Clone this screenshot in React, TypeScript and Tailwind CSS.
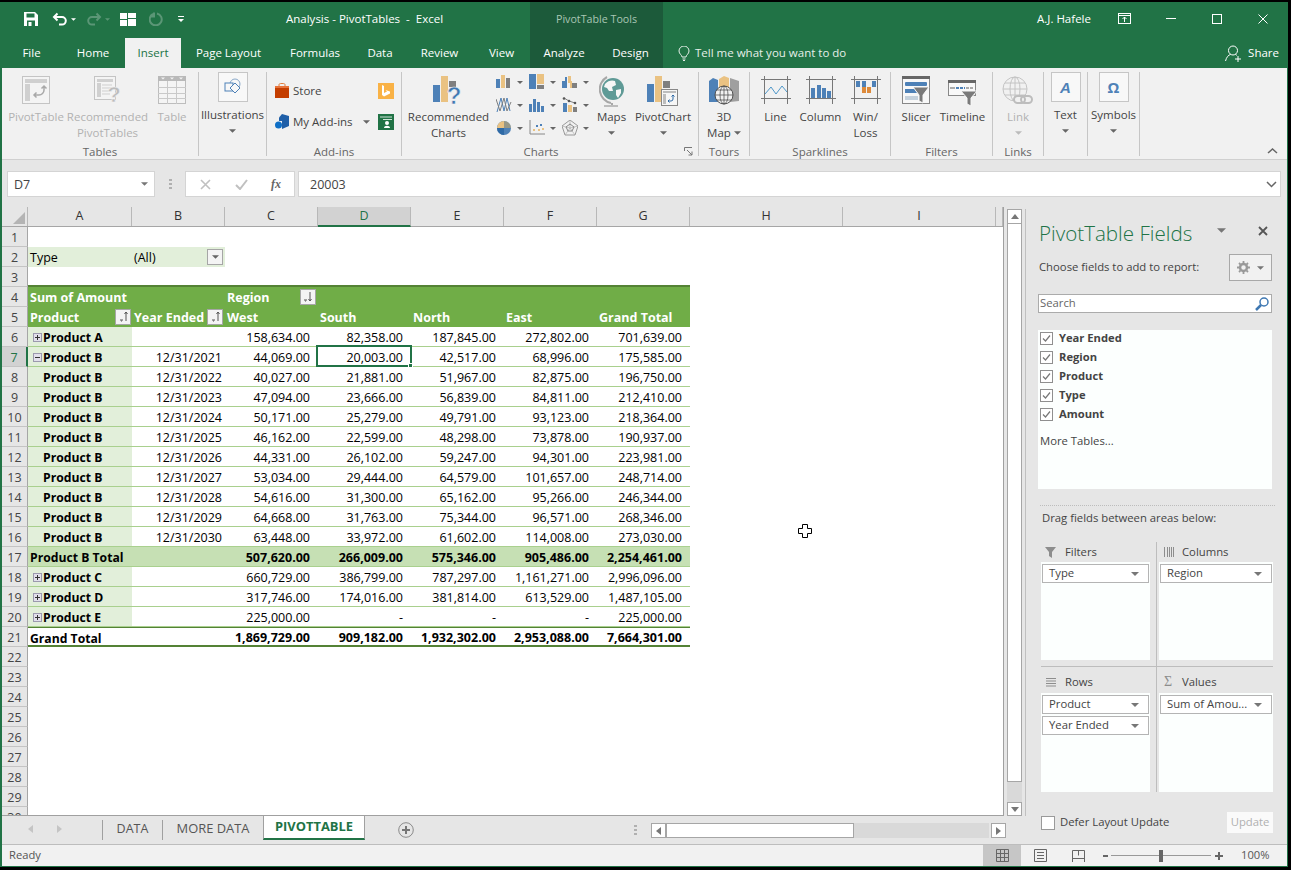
import React from "react";

const Caret = ({ c = "#666", w = 7, className = "" }: { c?: string; w?: number; className?: string }) => (
  <svg width={w} height={Math.ceil(w / 2) + 0} viewBox="0 0 8 4" className={"shrink-0 " + className}>
    <path d="M0 0h8L4 4z" fill={c} />
  </svg>
);

const Big = ({ w, lines, icon, caret, dis, boxed, inlineCaret }: { w: string; lines: string[]; icon: React.ReactNode; caret?: boolean; dis?: boolean; boxed?: boolean; inlineCaret?: boolean }) => (
  <div className={`${w} shrink-0 flex flex-col items-center ${boxed ? "pt-[4px]" : "pt-[8px]"} ${dis ? "text-[#b1b1b1]" : "text-[#444]"}`}>
    <div className={`${boxed ? "h-[35px]" : "h-[33px]"} w-full flex justify-center items-start`}>{icon}</div>
    {lines.map((l, i) => (
      <div key={i} className="h-[16px] leading-[16px] whitespace-nowrap text-[11.5px] flex items-center gap-[3px]">
        {l}
        {inlineCaret && i === lines.length - 1 && <Caret c="#666" />}
      </div>
    ))}
    {caret && <Caret c={dis ? "#bbb" : "#666"} className="mt-[6px]" />}
  </div>
);

const Group = ({ w, label, children, launcher }: { w: string; label: string; children: React.ReactNode; launcher?: boolean }) => (
  <div className={`${w} shrink-0 h-[91px] flex flex-col`}>
    <div className="h-[76px] flex items-start">{children}</div>
    <div className="h-[15px] mt-px flex items-center text-[11.5px] leading-[15px] text-[#666]">
      <div className="flex-1 text-center">{label}</div>
      {launcher && (
        <div className="w-[18px] flex justify-start pl-[4px]">
          <svg width="9" height="9" viewBox="0 0 9 9"><path d="M.5 4V.5H8M3 3l5 5M8 4.5V8H4.5" fill="none" stroke="#777" /></svg>
        </div>
      )}
    </div>
  </div>
);

const Sep = () => <div className="w-px shrink-0 h-[84px] mt-[4px] bg-[#c6c6c6]" />;

const Boxed = ({ children }: { children: React.ReactNode }) => (
  <div className="w-[30px] h-[30px] bg-[#f8f8f8] border border-[#c6c6c6] flex items-center justify-center">{children}</div>
);

/* ---------- ribbon icons ---------- */
const IcPivot = () => (
  <svg width="28" height="28" viewBox="0 0 28 28">
    <rect x=".5" y=".5" width="27" height="27" fill="#f4f4f4" stroke="#c4c4c4" />
    <rect x="3" y="3" width="22" height="4" fill="#d0d0d0" />
    <rect x="3" y="8" width="5" height="17" fill="#d0d0d0" />
    <path d="M22 10v4a5 5 0 0 1-5 5h-5M19.5 12.5 22 10l2.5 2.5M14.5 16.5 12 19l2.5 2.5" fill="none" stroke="#a9a9a9" strokeWidth="1.5" />
  </svg>
);
const IcRecPivot = () => (
  <svg width="28" height="33" viewBox="0 0 28 33">
    <rect x=".5" y=".5" width="21" height="23" fill="#f4f4f4" stroke="#c4c4c4" />
    <rect x="3" y="3" width="16" height="3" fill="#d0d0d0" />
    <rect x="3" y="7" width="4" height="14" fill="#d0d0d0" />
    <path d="M8 9h10M8 12h10M8 15h8M8 18h8" stroke="#cfcfcf" />
    <text x="20" y="26" textAnchor="middle" fontSize="22" fontWeight="700" fontFamily="'Liberation Sans',sans-serif" fill="#bcbcbc" stroke="#f1f1f1" strokeWidth=".5">?</text>
  </svg>
);
const IcTable = () => (
  <svg width="28" height="28" viewBox="0 0 28 28">
    <rect x=".5" y=".5" width="27" height="27" fill="#f4f4f4" stroke="#bdbdbd" />
    <rect x="0" y="0" width="28" height="5" fill="#b9b9b9" />
    <path d="M0 11.5h28M0 17.5h28M0 22.5h28M9.5 5v23M18.5 5v23" stroke="#c9c9c9" />
    <path d="M3 1.5h4L5 3.5zM12 1.5h4L14 3.5zM21 1.5h4L23 3.5z" fill="#f4f4f4" />
  </svg>
);
const IcIllus = () => (
  <svg width="18" height="18" viewBox="0 0 18 18">
    <circle cx="11" cy="6" r="5" fill="none" stroke="#8aa9c9" />
    <rect x="1" y="5" width="8" height="8" fill="#f8f8f8" stroke="#4e81b7" />
    <path d="M11 5l5 5-5 5-5-5z" fill="#f8f8f8" stroke="#4e81b7" />
  </svg>
);
const IcStore = () => (
  <svg width="14" height="15" viewBox="0 0 14 15">
    <path d="M4 3V1.5C4 .8 5 .5 7 .5s3 .3 3 1V3" fill="none" stroke="#e07b39" />
    <path d="M0 3h14v12H0z" fill="#c43e00" />
    <path d="M0 3h14v2H0z" fill="#e8743b" />
  </svg>
);
const IcBing = () => (
  <div className="w-[16px] h-[16px] bg-[#f9b246] flex items-center justify-center">
    <svg width="10" height="12" viewBox="0 0 10 12"><path d="M1 0l2 1v7l3-1.5L4.5 5 9 6.5v2L3 11.5 1 10z" fill="#fff" /></svg>
  </div>
);
const IcAddins = () => (
  <svg width="15" height="15" viewBox="0 0 15 15">
    <path d="M7 0l7 2v10l-7 3V8L7 6z" fill="#1f5fa8" />
    <path d="M4 3.5L7 0l0 7-3 0z" fill="#1f5fa8" />
    <circle cx="3.5" cy="11" r="3.5" fill="#0f6fc6" />
  </svg>
);
const IcGreen = () => (
  <div className="w-[16px] h-[16px] bg-[#217346] flex items-center justify-center">
    <svg width="12" height="12" viewBox="0 0 12 12"><path d="M0 1h12M3 3.5h9" stroke="#cfe3d7" /><circle cx="7" cy="7" r="2" fill="#fff" /><path d="M4 12c0-3 6-3 6 0z" fill="#fff" /></svg>
  </div>
);
const IcRecCharts = () => (
  <svg width="32" height="34" viewBox="0 0 32 34">
    <rect x="0" y="9" width="7" height="17" fill="#4e81b7" />
    <rect x="8" y="0" width="7" height="26" fill="#eac282" />
    <rect x="16" y="5" width="7" height="6" fill="#7f7f7f" />
    <text x="21" y="28" textAnchor="middle" fontSize="24" fontWeight="700" fontFamily="'Liberation Sans',sans-serif" fill="#3f78b2" stroke="#f1f1f1" strokeWidth=".6">?</text>
  </svg>
);
const B = "#4e81b7", T = "#eac282", G = "#7f7f7f", O = "#dd8a3a";
const Mini = ({ n }: { n: number }) => {
  const g: Record<number, React.ReactNode> = {
    0: <><rect x="0" y="5" width="4" height="9" fill={B} /><rect x="5" y="1" width="4" height="13" fill={T} /><rect x="10" y="4" width="4" height="10" fill={G} /></>,
    1: <><rect x="0" y="0" width="7" height="15" fill={B} /><rect x="8" y="0" width="7" height="10" fill={T} /><rect x="8" y="11" width="7" height="4" fill={G} /></>,
    2: <><path d="M0 14V7h3V3h2v11z" fill={B} /><path d="M6 14V2h3v5h1v7h-2V9H6z" fill={T} /><rect x="10" y="9" width="5" height="5" fill={G} /></>,
    3: <><path d="M1 15L5 1l3 13 3-13 3 13" fill="none" stroke={B} /><path d="M0 2l4 12 4-13 3 13 4-9" fill="none" stroke={G} /></>,
    4: <><rect x="0" y="7" width="3" height="8" fill={B} /><rect x="4" y="2" width="3" height="13" fill={B} /><rect x="8" y="5" width="3" height="10" fill={B} /><rect x="12" y="9" width="3" height="6" fill={B} /></>,
    5: <><rect x="1" y="6" width="4" height="9" fill={B} /><rect x="6" y="8" width="4" height="7" fill={T} /><rect x="11" y="10" width="4" height="5" fill={G} /><path d="M2 1l5 3 6 2" fill="none" stroke={G} /><circle cx="2" cy="1.5" r="1.3" fill="#555" /><circle cx="7" cy="4" r="1.3" fill="#555" /><circle cx="13" cy="6" r="1.3" fill="#555" /></>,
    6: <><circle cx="8" cy="8" r="7" fill={B} /><path d="M8 8V1a7 7 0 0 0-7 7z" fill={T} /><path d="M8 8H1a7 7 0 0 0 7 7z" fill="#2f6aa6" /><path d="M8 1v7h7a7 7 0 0 0-7-7z" fill="#c9a968" opacity=".6" /></>,
    7: <><path d="M1 0v14h15" fill="none" stroke="#888" /><rect x="4" y="9" width="2" height="2" fill={T} /><rect x="7" y="5" width="2" height="2" fill={B} /><rect x="9" y="9" width="2" height="2" fill={T} /><rect x="11" y="4" width="2" height="2" fill={B} /><rect x="13" y="8" width="2" height="2" fill={T} /></>,
    8: <><path d="M8 0l8 6-3 9H3L0 6z" fill="none" stroke="#999" /><path d="M8 0v8M0 6l8 2M16 6L8 8M3 15l5-7M13 15L8 8" stroke="#aaa" fill="none" strokeWidth=".7" /><path d="M8 4l4 3-2 4H6L4 7z" fill="none" stroke="#888" /></>,
  };
  return <svg width="16" height="16" viewBox="0 0 16 16">{g[n]}</svg>;
};
const IcMaps = () => (
  <svg width="26" height="31" viewBox="0 0 26 31">
    <path d="M8 1a14 14 0 0 0 4 26M13 27v2" fill="none" stroke="#a7a7a7" strokeWidth="2" />
    <path d="M5 29h14v2H5z" fill="#bcbcbc" />
    <circle cx="14" cy="13" r="11" fill="#5f9a96" />
    <path d="M6 8c3-4 8-4 10-3l1 4-4 2 1 4-4 0-2-3-3-1zM17 14l5-1 0 4-3 5-2-3z" fill="#f6f6f6" />
  </svg>
);
const IcPivotChart = () => (
  <svg width="32" height="30" viewBox="0 0 32 30">
    <rect x="0" y="8" width="7" height="18" fill={B} />
    <rect x="8" y="0" width="7" height="26" fill={T} />
    <rect x="16" y="5" width="7" height="7" fill={G} />
    <rect x="14.5" y="13.5" width="16" height="16" fill="#f6f6f6" stroke="#888" />
    <path d="M16 15h13v2H16zM16 18h3v10h-3z" fill="#bdbdbd" />
    <path d="M26 19v4a2 2 0 0 1-2 2h-3M24.5 20.5l1.5-1.5 1.5 1.5M22.5 23.5L21 25l1.5 1.5" fill="none" stroke="#2f6aa6" />
  </svg>
);
const Ic3D = () => (
  <svg width="30" height="29" viewBox="0 0 30 29">
    <path d="M0 5l4-3 5 2v22H0z" fill={B} />
    <path d="M10 3l5-3 5 2v14H10z" fill={T} />
    <path d="M21 2l9 3v20l-9 1z" fill="#9f9f9f" />
    <circle cx="15" cy="19" r="9" fill="#f1f1f1" stroke="#444" strokeWidth=".9" />
    <path d="M6 19h18M15 10v18M8 14h14M8 24h14" stroke="#444" strokeWidth=".7" fill="none" />
    <ellipse cx="15" cy="19" rx="4" ry="9" fill="none" stroke="#444" strokeWidth=".7" />
  </svg>
);
const SparkFrame = ({ children }: { children: React.ReactNode }) => (
  <svg width="30" height="28" viewBox="0 0 30 28">
    <path d="M0 3.5h30M0 22.5h30M3.5 0v28M26.5 0v28" stroke="#777" />
    {children}
  </svg>
);
const IcSlicer = () => (
  <svg width="28" height="28" viewBox="0 0 28 28">
    <rect x=".5" y=".5" width="27" height="27" fill="#f8f8f8" stroke="#888" />
    <rect x="0" y="0" width="28" height="3" fill="#666" />
    <rect x="3" y="6" width="22" height="4" rx="1" fill={B} />
    <rect x="3" y="13" width="12" height="4" fill={B} />
    <rect x="3" y="20" width="13" height="4" fill="#c5d1dc" />
    <path d="M11 11h16l-6 8v8l-4-2v-6z" fill="#7a7a7a" stroke="#f8f8f8" />
  </svg>
);
const IcTimeline = () => (
  <svg width="29" height="26" viewBox="0 0 29 26">
    <rect x=".5" y=".5" width="27" height="15" fill="#f8f8f8" stroke="#888" />
    <rect x="0" y="0" width="28" height="3" fill="#666" />
    <path d="M2 8h5" stroke="#aaa" strokeWidth="2" />
    <path d="M8 8h9" stroke={B} strokeWidth="2" strokeDasharray="3 1" />
    <path d="M18 8h8" stroke="#aaa" strokeWidth="2" strokeDasharray="3 1" />
    <path d="M13 11h16l-6 7v8l-4-2v-6z" fill="#7a7a7a" stroke="#f8f8f8" />
  </svg>
);
const IcLink = () => (
  <svg width="32" height="32" viewBox="0 0 32 32">
    <circle cx="13" cy="13" r="12" fill="none" stroke="#c4c4c4" />
    <ellipse cx="13" cy="13" rx="5" ry="12" fill="none" stroke="#c4c4c4" />
    <path d="M1 13h24M3 7h20M3 19h20M13 1v24" stroke="#c4c4c4" />
    <rect x="12" y="20" width="11" height="7" rx="3.5" fill="#f1f1f1" stroke="#bdbdbd" strokeWidth="2" />
    <rect x="19" y="20" width="11" height="7" rx="3.5" fill="none" stroke="#bdbdbd" strokeWidth="2" />
  </svg>
);

/* ---------- sheet ---------- */
const allHeaders = [
  ["A", "w-[104px]"], ["B", "w-[93px]"], ["C", "w-[93px]"], ["D", "w-[93px]"], ["E", "w-[93px]"], ["F", "w-[93px]"], ["G", "w-[93px]"], ["H", "w-[153px]"], ["I", "w-[153px]"], ["", "w-[7px]"],
];

type Row = { n: number; a: string; exp?: "+" | "-"; b?: string; v: string[]; kind?: "total" | "grand" | "child" };
const rows: Row[] = [
  { n: 6, a: "Product A", exp: "+", v: ["158,634.00", "82,358.00", "187,845.00", "272,802.00", "701,639.00"] },
  { n: 7, a: "Product B", exp: "-", b: "12/31/2021", v: ["44,069.00", "20,003.00", "42,517.00", "68,996.00", "175,585.00"] },
  { n: 8, a: "Product B", kind: "child", b: "12/31/2022", v: ["40,027.00", "21,881.00", "51,967.00", "82,875.00", "196,750.00"] },
  { n: 9, a: "Product B", kind: "child", b: "12/31/2023", v: ["47,094.00", "23,666.00", "56,839.00", "84,811.00", "212,410.00"] },
  { n: 10, a: "Product B", kind: "child", b: "12/31/2024", v: ["50,171.00", "25,279.00", "49,791.00", "93,123.00", "218,364.00"] },
  { n: 11, a: "Product B", kind: "child", b: "12/31/2025", v: ["46,162.00", "22,599.00", "48,298.00", "73,878.00", "190,937.00"] },
  { n: 12, a: "Product B", kind: "child", b: "12/31/2026", v: ["44,331.00", "26,102.00", "59,247.00", "94,301.00", "223,981.00"] },
  { n: 13, a: "Product B", kind: "child", b: "12/31/2027", v: ["53,034.00", "29,444.00", "64,579.00", "101,657.00", "248,714.00"] },
  { n: 14, a: "Product B", kind: "child", b: "12/31/2028", v: ["54,616.00", "31,300.00", "65,162.00", "95,266.00", "246,344.00"] },
  { n: 15, a: "Product B", kind: "child", b: "12/31/2029", v: ["64,668.00", "31,763.00", "75,344.00", "96,571.00", "268,346.00"] },
  { n: 16, a: "Product B", kind: "child", b: "12/31/2030", v: ["63,448.00", "33,972.00", "61,602.00", "114,008.00", "273,030.00"] },
  { n: 17, a: "Product B Total", kind: "total", v: ["507,620.00", "266,009.00", "575,346.00", "905,486.00", "2,254,461.00"] },
  { n: 18, a: "Product C", exp: "+", v: ["660,729.00", "386,799.00", "787,297.00", "1,161,271.00", "2,996,096.00"] },
  { n: 19, a: "Product D", exp: "+", v: ["317,746.00", "174,016.00", "381,814.00", "613,529.00", "1,487,105.00"] },
  { n: 20, a: "Product E", exp: "+", v: ["225,000.00", "-", "-", "-", "225,000.00"] },
  { n: 21, a: "Grand Total", kind: "grand", v: ["1,869,729.00", "909,182.00", "1,932,302.00", "2,953,088.00", "7,664,301.00"] },
];

const Heading = ({ n, active }: { n: number; active?: boolean }) => (
  <div className={`w-[26px] shrink-0 h-[20px] flex items-center justify-center pt-[4px] text-[12.5px] border-b border-[#c4c4c4] ${active ? "bg-[#d2d2d2] text-[#217346] border-r-2 border-r-[#217346]" : "bg-[#e6e6e6] text-[#444] border-r border-r-[#a6a6a6]"}`}>
    {n}
  </div>
);

const SortBtn = ({ up = true }: { up?: boolean }) => (
  <div className="w-[16px] h-[16px] -mt-[2px] bg-[#f4f4f4] border border-[#a6a6a6] flex items-center justify-center shrink-0">
    <svg width="12" height="12" viewBox="0 0 12 12">
      {up ? <path d="M9 1v9M7.500 3L9 1l1.500 2M3 9h3M4 10h1" stroke="#555" fill="none" /> : <path d="M8 1v9M6.500 8L8 10l1.500-2M2 9h3M3 10h1" stroke="#555" fill="none" />}
    </svg>
  </div>
);

const ExpBox = ({ plus }: { plus: boolean }) => (
  <div className="w-[9px] h-[9px] -mt-[3px] bg-[#e3e0ec] border border-[#9c9aae] flex items-center justify-center shrink-0 mr-px">
    <svg width="7" height="7" viewBox="0 0 7 7"><path d={plus ? "M1 3.500h5M3.500 1v5" : "M1 3.500h5"} stroke="#333" /></svg>
  </div>
);

const DataRow = ({ r }: { r: Row }) => {
  const tot = r.kind === "total";
  const gr = r.kind === "grand";
  const bold = tot || gr;
  const rowCls = gr
    ? "h-[20px] flex border-b-2 border-[#548235] border-t border-t-[#548235]"
    : `h-[20px] flex border-b border-[#a9d08e] ${tot ? "bg-[#c6e0b4]" : ""}`;
  return (
    <div className="flex h-[20px]">
      <Heading n={r.n} active={r.n === 7} />
      <div className={rowCls + " w-[662px] text-black"}>
        <div className={`w-[104px] h-[19px] flex items-center pt-[4px] font-bold text-[12.2px] whitespace-nowrap ${bold ? "pl-[2px]" : "pl-[5px]"} ${!bold ? "bg-[#e2efda]" : ""} ${gr ? "h-[17px] pt-[2px]" : ""}`}>
          {r.exp ? <ExpBox plus={r.exp === "+"} /> : r.kind === "child" ? <div className="w-[10px]" /> : null}
          {r.a}
        </div>
        <div className="w-[93px] h-[19px] flex items-center justify-end pt-[4px] pr-[3px]">{r.b}</div>
        {r.v.map((v, i) => (
          <div key={i} className={`w-[93px] h-[19px] flex items-center justify-end pr-[8px] relative ${gr ? "pt-[2px] h-[17px]" : "pt-[4px]"} ${bold ? "font-bold" : ""}`}>
            {v}
            {r.n === 7 && i === 1 && (
              <div className="absolute -left-[2px] -top-[2px] w-[96px] h-[22px] border-2 border-[#217346]">
                <div className="absolute -right-[3px] -bottom-[3px] w-[5px] h-[5px] bg-[#217346] border border-white" />
              </div>
            )}
          </div>
        ))}
      </div>
    </div>
  );
};

const Field = ({ t }: { t: string }) => (
  <div className="h-[19px] flex items-center gap-[6px] pl-[2px] pb-[3px]">
    <div className="w-[13px] h-[13px] bg-white border border-[#8f8f8f] flex items-center justify-center">
      <svg width="9" height="9" viewBox="0 0 9 9"><path d="M1 4.500l2.500 2.500L8 1.500" fill="none" stroke="#777" strokeWidth="1.200" /></svg>
    </div>
    <span className="font-bold text-[#444] text-[11.2px]">{t}</span>
  </div>
);

const AreaItem = ({ t }: { t: string }) => (
  <div className="h-[19px] mx-px mt-[2px] bg-white border border-[#b4b4b4] flex items-center justify-between pl-[6px] pr-[9px] text-[11.3px] text-[#444] whitespace-nowrap">
    <span>{t}</span>
    <Caret c="#777" w={8} />
  </div>
);

export default function App() {
  return (
    <div className="w-[1291px] h-[870px] bg-black pt-[2px] pr-[3px] pb-[3px] flex flex-col font-['Open_Sans',sans-serif] overflow-hidden relative">
      <div className="flex-1 flex flex-col border-l-2 border-r border-b border-[#217346] min-h-0">
        {/* title bar */}
        <div className="h-[36px] shrink-0 bg-[#217346] flex items-center text-white text-[11.5px] relative">
          <div className="w-[528px] h-full flex items-center shrink-0 pb-[2px]">
            <div className="flex items-center">
              <div className="ml-[21px]">
                <svg width="16" height="16" viewBox="0 0 16 16"><path d="M1 1h11l3 3v11H1z" fill="#fff" /><rect x="3.500" y="2.500" width="8" height="4" fill="#217346" /><rect x="4" y="9.500" width="8" height="5.500" fill="#217346" /><rect x="5.500" y="11" width="3" height="4" fill="#fff" /></svg>
              </div>
              <div className="ml-[13px]">
                <svg width="16" height="14" viewBox="0 0 16 14"><path d="M5.500 1.500L2 5l3.500 3.500M2 5h8a3.800 3.800 0 0 1 0 7.600H7" fill="none" stroke="#fff" strokeWidth="2" /></svg>
              </div>
              <Caret c="#fff" w={5} className="ml-[3px]" />
              <div className="ml-[10px]">
                <svg width="16" height="14" viewBox="0 0 16 14"><path d="M10.500 1.500L14 5l-3.500 3.500M14 5H6a3.800 3.800 0 0 0 0 7.600h3" fill="none" stroke="#5b9676" strokeWidth="2" /></svg>
              </div>
              <Caret c="#5b9676" w={5} className="ml-[3px]" />
              <div className="ml-[10px]">
                <svg width="16" height="13" viewBox="0 0 16 13"><path d="M0 0h7v6H0zM0 7h7v6H0zM8 0h8v5H8zM8 6h8v7H8z" fill="#fff" /></svg>
              </div>
              <div className="ml-[13px]">
                <svg width="14" height="14" viewBox="0 0 14 14"><path d="M8 1.500A6 6 0 1 1 4 2M5 .5v4H1" fill="none" stroke="#5b9676" strokeWidth="2" /></svg>
              </div>
              <div className="ml-[15px] flex flex-col items-center gap-[2px]">
                <div className="w-[6px] h-px bg-white" />
                <Caret c="#fff" w={6} />
              </div>
            </div>
          </div>
          <div className="absolute left-[284px] top-0 h-full flex items-center whitespace-pre pb-[2px]">Analysis - PivotTables  -  Excel</div>
          <div className="w-[133px] h-full bg-[#1c5a3a] flex items-center justify-center text-[#a9c6b4] text-[10.7px] shrink-0 pb-[2px]">PivotTable Tools</div>
          <div className="ml-[374px] w-[56px] whitespace-nowrap mb-[2px]">A.J. Hafele</div>
          <div className="ml-[25px] mb-[3px]"><svg width="13" height="11" viewBox="0 0 13 11"><rect x=".5" y=".5" width="12" height="10" fill="none" stroke="#fff" /><path d="M0 2.500h13M6.500 9V4M4.500 6l2-2 2 2" fill="none" stroke="#fff" /></svg></div>
          <div className="ml-[35px] w-[10px] h-px bg-white mb-[3px]" />
          <div className="ml-[36px] w-[10px] h-[10px] border border-white mb-[3px]" />
          <div className="ml-[36px] mb-[3px]"><svg width="10" height="10" viewBox="0 0 10 10"><path d="M.5.500l9 9M9.500.500l-9 9" stroke="#fff" /></svg></div>
        </div>
        {/* tabs */}
        <div className="h-[30px] shrink-0 bg-[#217346] flex items-center text-white text-[11.5px]">
          {[["File", "w-[59px]"], ["Home", "w-[64px]"]].map(([t, w]) => (
            <div key={t} className={`${w} text-center`}>{t}</div>
          ))}
          <div className="w-[56px] h-full bg-[#f1f1f1] text-[#217346] flex items-center justify-center">Insert</div>
          {[["Page Layout", "w-[95px]"], ["Formulas", "w-[78px]"], ["Data", "w-[52px]"], ["Review", "w-[67px]"], ["View", "w-[57px]"]].map(([t, w]) => (
            <div key={t} className={`${w} text-center`}>{t}</div>
          ))}
          <div className="h-full bg-[#1c5a3a] flex items-center w-[133px]">
            <div className="w-[68px] text-center">Analyze</div>
            <div className="w-[65px] text-center">Design</div>
          </div>
          <div className="ml-[15px] flex items-center gap-[5px] text-[#e6efe9]">
            <svg width="12" height="15" viewBox="0 0 12 15"><path d="M4 11c0-2-3-3-3-6a5 5 0 0 1 10 0c0 3-3 4-3 6zM4.500 13h3M5 14.500h2" fill="none" stroke="#e6efe9" /></svg>
            Tell me what you want to do
          </div>
          <div className="ml-auto mr-[8px] flex items-center gap-[6px]">
            <svg width="17" height="17" viewBox="0 0 17 17"><circle cx="8" cy="5.500" r="4.500" fill="none" stroke="#fff" /><path d="M.5 16c1-4 3-6 5-6.500M10.500 9.500c.5.200 1 .5 1.500 1M10 14h6M13 11v6" fill="none" stroke="#fff" /></svg>
            Share
          </div>
        </div>
        {/* ribbon */}
        <div className="h-[92px] shrink-0 bg-[#f1f1f1] border-b border-[#d0d0d0] flex items-start">
          <Group w="w-[196px]" label="Tables">
            <div className="w-[4px]" />
            <Big w="w-[60px]" lines={["PivotTable"]} icon={<IcPivot />} dis />
            <Big w="w-[83px]" lines={["Recommended", "PivotTables"]} icon={<IcRecPivot />} dis />
            <Big w="w-[46px]" lines={["Table"]} icon={<IcTable />} dis />
          </Group>
          <Sep />
          <Group w="w-[67px]" label="">
            <Big w="w-full" lines={["Illustrations"]} boxed caret icon={<Boxed><IcIllus /></Boxed>} />
          </Group>
          <Sep />
          <Group w="w-[134px]" label="Add-ins">
            <div className="w-full pl-[8px] pr-[7px] pt-[14px] text-[11.5px] text-[#444]">
              <div className="h-[17px] flex items-center">
                <IcStore />
                <span className="ml-[4px]">Store</span>
                <div className="ml-auto"><IcBing /></div>
              </div>
              <div className="h-[17px] flex items-center mt-[14px]">
                <IcAddins />
                <span className="ml-[3px] w-[62px] whitespace-nowrap">My Add-ins</span>
                <Caret c="#666" className="ml-[8px]" />
                <div className="ml-auto"><IcGreen /></div>
              </div>
            </div>
          </Group>
          <Sep />
          <Group w="w-[296px]" label="Charts" launcher>
            <Big w="w-[93px]" lines={["Recommended", "Charts"]} icon={<IcRecCharts />} />
            <div className="w-[100px] shrink-0 grid grid-cols-3 pt-[6px] gap-y-[7px] pl-[1px]">
              {[0, 1, 2, 3, 4, 5, 6, 7, 8].map((n) => (
                <div key={n} className="flex items-center gap-[5px] h-[16px]">
                  <Mini n={n} />
                  <Caret c="#666" w={6} />
                </div>
              ))}
            </div>
            <Big w="w-[33px]" lines={["Maps"]} caret icon={<IcMaps />} />
            <Big w="w-[70px]" lines={["PivotChart"]} caret icon={<IcPivotChart />} />
          </Group>
          <Sep />
          <Group w="w-[50px]" label="Tours">
            <Big w="w-full" lines={["3D", "Map"]} inlineCaret icon={<Ic3D />} />
          </Group>
          <Sep />
          <Group w="w-[140px]" label="Sparklines">
            <div className="w-[3px]" />
            <Big w="w-[45px]" lines={["Line"]} icon={<SparkFrame><path d="M4 18l6-7 5 7 6-8 5 6" fill="none" stroke="#4e97c9" /></SparkFrame>} />
            <Big w="w-[45px]" lines={["Column"]} icon={<SparkFrame><path d="M5 12h4v10H5zM11 9h4v13h-4zM16 12h4v10h-4zM21 15h4v7h-4z" fill={B} /></SparkFrame>} />
            <Big w="w-[45px]" lines={["Win/", "Loss"]} icon={<SparkFrame><path d="M5 5h4v6H5zM11 5h4v6h-4zM21 5h4v6h-4z" fill={B} /><path d="M16 11h4v6h-4zM11 11h4v6h-4z" fill={O} /></SparkFrame>} />
          </Group>
          <Sep />
          <Group w="w-[101px]" label="Filters">
            <div className="w-[1px]" />
            <Big w="w-[48px]" lines={["Slicer"]} icon={<IcSlicer />} />
            <Big w="w-[45px]" lines={["Timeline"]} icon={<div className="pt-[4px]"><IcTimeline /></div>} />
          </Group>
          <Sep />
          <Group w="w-[50px]" label="Links">
            <Big w="w-full" lines={["Link"]} caret dis icon={<IcLink />} />
          </Group>
          <Sep />
          <Group w="w-[43px]" label="">
            <Big w="w-full" lines={["Text"]} boxed caret icon={<Boxed><span className="text-[#4e81b7] font-bold italic text-[15px] leading-none font-['Liberation_Sans',sans-serif]">A</span></Boxed>} />
          </Group>
          <Sep />
          <Group w="w-[51px]" label="">
            <Big w="w-full" lines={["Symbols"]} boxed caret icon={<Boxed><span className="text-[#4e81b7] font-bold text-[15px] leading-none">Ω</span></Boxed>} />
          </Group>
          <Sep />
          <div className="flex-1 h-[91px] flex items-end justify-end pr-[9px] pb-[5px]">
            <svg width="11" height="6" viewBox="0 0 11 6"><path d="M1 5l4.500-4L10 5" fill="none" stroke="#666" strokeWidth="1.500" /></svg>
          </div>
        </div>
        {/* formula bar */}
        <div className="h-[47px] shrink-0 bg-[#e6e6e6] pt-[11px] pl-[5px] pr-[6px] flex items-start text-[12.5px] text-[#444]">
          <div className="w-[148px] h-[26px] bg-white border border-[#d4d4d4] flex items-center justify-between pl-[6px] pr-[6px]">
            <span className="pt-[2px]">D7</span>
            <Caret c="#777" w={7} />
          </div>
          <div className="w-[30px] h-[26px] flex items-center justify-center">
            <svg width="3" height="11" viewBox="0 0 3 11"><path d="M0 0h3v2H0zM0 4h3v2H0zM0 8h3v2H0z" fill="#b0b0b0" /></svg>
          </div>
          <div className="w-[110px] h-[26px] bg-white border border-[#d4d4d4] flex items-center">
            <div className="w-[38px] flex justify-center"><svg width="11" height="11" viewBox="0 0 11 11"><path d="M1 1l9 9M10 1l-9 9" stroke="#c0c0c0" strokeWidth="1.600" /></svg></div>
            <div className="w-[34px] flex justify-center"><svg width="13" height="11" viewBox="0 0 13 11"><path d="M1 6l4 4 7-9" fill="none" stroke="#c0c0c0" strokeWidth="2" /></svg></div>
            <div className="w-[36px] text-center italic font-bold text-[#666] text-[12px] font-['Liberation_Serif',serif]">fx</div>
          </div>
          <div className="ml-[3px] flex-1 h-[26px] bg-white border border-[#d4d4d4] flex items-center justify-between pl-[11px] pr-[3px]">
            <span className="pt-[2px]">20003</span>
            <svg width="11" height="7" viewBox="0 0 11 7"><path d="M1 1l4.500 4.500L10 1" fill="none" stroke="#666" strokeWidth="1.500" /></svg>
          </div>
        </div>
        {/* workspace */}
        <div className="flex-1 flex min-h-0 bg-[#e6e6e6]">
          {/* left */}
          <div className="w-[1024px] shrink-0 flex flex-col">
            <div className="h-[609px] flex">
              <div className="w-[1002px] shrink-0 overflow-hidden border-r border-b border-[#a0a0a0] bg-white text-[12.5px]">
                {/* col headers */}
                <div className="flex h-[20px] bg-[#e6e6e6] border-b border-[#a6a6a6]">
                  <div className="w-[26px] shrink-0 flex items-end justify-end pr-[2px] pb-[2px] border-r border-[#b8b8b8]">
                    <svg width="12" height="12" viewBox="0 0 12 12"><path d="M12 0v12H0z" fill="#b4b4b4" /></svg>
                  </div>
                  {allHeaders.map(([h, w], i) => (
                    <div key={i} className={`${w} shrink-0 flex items-center justify-center border-r border-[#b8b8b8] text-[12.5px] ${h === "D" ? "bg-[#d2d2d2] text-[#217346] border-b-2 border-b-[#217346] h-[20px]" : "text-[#333]"}`}>{h}</div>
                  ))}
                </div>
                {/* row 1 */}
                <div className="flex h-[20px]"><Heading n={1} /></div>
                <div className="flex h-[20px]">
                  <Heading n={2} />
                  <div className="w-[197px] h-full bg-[#e2efda] flex items-center text-black pt-[2px]">
                    <div className="w-[104px] pl-[2px]">Type</div>
                    <div className="flex-1 flex items-center justify-between pl-[2px] pr-[2px]">
                      (All)
                      <div className="w-[16px] h-[16px] -mt-[2px] bg-[#f4f4f4] border border-[#a6a6a6] flex items-center justify-center"><Caret c="#666" /></div>
                    </div>
                  </div>
                </div>
                <div className="flex h-[20px]">
                  <Heading n={3} />
                  <div className="w-[662px] h-full border-b-2 border-[#548235]" />
                </div>
                <div className="flex h-[20px]">
                  <Heading n={4} />
                  <div className="w-[662px] h-full bg-[#70ad47] text-white font-bold flex items-center pt-[2px]">
                    <div className="w-[197px] pl-[2px]">Sum of Amount</div>
                    <div className="w-[93px] pl-[2px] whitespace-nowrap">Region</div>
                    <div className="w-[0px] -ml-[18px] mr-[18px]"><SortBtn up={false} /></div>
                  </div>
                </div>
                <div className="flex h-[20px]">
                  <Heading n={5} />
                  <div className="w-[662px] h-full bg-[#70ad47] text-white font-bold flex items-center pt-[2px]">
                    <div className="w-[104px] pl-[2px] flex items-center justify-between pr-px">Product<SortBtn /></div>
                    <div className="w-[93px] pl-[2px] flex items-center justify-between pr-[2px] whitespace-nowrap">Year Ended<SortBtn /></div>
                    <div className="w-[93px] pl-[2px]">West</div>
                    <div className="w-[93px] pl-[2px]">South</div>
                    <div className="w-[93px] pl-[2px]">North</div>
                    <div className="w-[93px] pl-[2px]">East</div>
                    <div className="w-[93px] pl-[2px] whitespace-nowrap">Grand Total</div>
                  </div>
                </div>
                {rows.map((r) => <DataRow key={r.n} r={r} />)}
                {Array.from({ length: 9 }, (_, i) => 22 + i).map((n) => (
                  <div key={n} className="flex h-[20px]"><Heading n={n} /></div>
                ))}
              </div>
              {/* v scrollbar */}
              <div className="w-[21px] shrink-0 pl-[3px] pt-[2px] flex flex-col">
                <div className="w-[15px] h-[15px] bg-white border border-[#a6a6a6] flex items-center justify-center"><svg width="8" height="5" viewBox="0 0 8 5"><path d="M0 5h8L4 0z" fill="#777" /></svg></div>
                <div className="w-[15px] h-[558px] bg-white border border-[#a6a6a6] border-t-0" />
                <div className="w-[15px] h-[20px] bg-[#d9d9d9]" />
                <div className="w-[15px] h-[14px] bg-white border border-[#a6a6a6] flex items-center justify-center"><svg width="8" height="5" viewBox="0 0 8 5"><path d="M0 0h8L4 5z" fill="#777" /></svg></div>
              </div>
              <div className="w-px shrink-0 bg-[#c0c0c0] mt-[2px]" />
            </div>
            {/* sheet tabs */}
            <div className="h-[29px] border-b border-[#bdbdbd] flex items-start text-[12.5px] text-[#555]">
              <div className="w-[100px] h-[28px] flex items-center pl-[26px] gap-[24px] pb-[3px] shrink-0">
                <svg width="5" height="8" viewBox="0 0 5 8"><path d="M5 0v8L0 4z" fill="#c4c4c4" /></svg>
                <svg width="5" height="8" viewBox="0 0 5 8"><path d="M0 0v8l5-4z" fill="#c4c4c4" /></svg>
              </div>
              <div className="w-px h-[20px] mt-[4px] bg-[#a0a0a0]" />
              <div className="w-[59px] h-[26px] flex items-center justify-center">DATA</div>
              <div className="w-px h-[20px] mt-[4px] bg-[#a0a0a0]" />
              <div className="w-[100px] h-[26px] flex items-center justify-center whitespace-nowrap text-[12.9px]">MORE DATA</div>
              <div className="w-[102px] h-[25px] -mt-px bg-white border-l border-r border-t border-[#a0a0a0] border-b-2 border-b-[#217346] flex items-center justify-center font-bold text-[#217346] text-[12.9px]">PIVOTTABLE</div>
              <div className="ml-[33px] mt-[6px]">
                <svg width="16" height="16" viewBox="0 0 16 16"><circle cx="8" cy="8" r="7.300" fill="none" stroke="#8a8a8a" /><path d="M4 8h8M8 4v8" stroke="#777" strokeWidth="2" /></svg>
              </div>
              <div className="ml-[220px] mt-[9px]"><svg width="3" height="11" viewBox="0 0 3 11"><path d="M0 0h3v2H0zM0 4h3v2H0zM0 8h3v2H0z" fill="#b0b0b0" /></svg></div>
              <div className="ml-[14px] mt-[7px] flex h-[15px]">
                <div className="w-[15px] bg-white border border-[#a6a6a6] flex items-center justify-center"><svg width="5" height="8" viewBox="0 0 5 8"><path d="M5 0v8L0 4z" fill="#777" /></svg></div>
                <div className="w-[188px] bg-white border border-[#a6a6a6]" />
                <div className="w-[135px] bg-[#d9d9d9]" />
                <div className="w-[15px] ml-[2px] bg-white border border-[#a6a6a6] flex items-center justify-center"><svg width="5" height="8" viewBox="0 0 5 8"><path d="M0 0v8l5-4z" fill="#777" /></svg></div>
              </div>
            </div>
          </div>
          {/* panel */}
          <div className="w-[261px] shrink-0 border-b border-[#bdbdbd] flex flex-col text-[11.3px] text-[#444]">
            <div className="h-[27px] mt-[13px] pl-[13px] pr-[19px] flex items-center">
              <span className="text-[20.6px] leading-[27px] text-[#217346] font-light whitespace-nowrap">PivotTable Fields</span>
              <Caret c="#777" w={9} className="ml-auto mb-[6px]" />
              <div className="ml-[32px] mb-[6px]"><svg width="10" height="10" viewBox="0 0 10 10"><path d="M1 1l8 8M9 1l-8 8" stroke="#555" strokeWidth="1.800" /></svg></div>
            </div>
            <div className="h-[27px] mt-[7px] pl-[13px] pr-[15px] flex items-center justify-between">
              <span>Choose fields to add to report:</span>
              <div className="w-[43px] h-[27px] bg-[#f1f1f1] border border-[#a8a8a8] flex items-center justify-center gap-[7px]">
                <svg width="13" height="13" viewBox="0 0 13 13"><circle cx="6.500" cy="6.500" r="3.500" fill="none" stroke="#999" strokeWidth="2.500" /><path d="M6.500 0v13M0 6.500h13M2 2l9 9M11 2l-9 9" stroke="#999" strokeWidth="1.800" strokeDasharray="2.200 8.600" /></svg>
                <Caret c="#777" />
              </div>
            </div>
            <div className="ml-[12px] w-[234px] h-[19px] mt-[13px] bg-white border border-[#ababab] flex items-center justify-between pl-[1px] pr-[2px] text-[#666]">
              <span>Search</span>
              <svg width="14" height="14" viewBox="0 0 14 14"><circle cx="9" cy="5" r="4" fill="none" stroke="#3f78b2" strokeWidth="1.500" /><path d="M6 8l-5 5" stroke="#3f78b2" strokeWidth="2.500" /></svg>
            </div>
            <div className="ml-[12px] w-[234px] h-[159px] mt-[17px] bg-[#fcfffe]">
              {["Year Ended", "Region", "Product", "Type", "Amount"].map((f) => <Field key={f} t={f} />)}
              <div className="pl-[2px] mt-[8px]">More Tables...</div>
            </div>
            <div className="ml-[14px] w-[235px] mt-[16px] border-t border-dotted border-[#bdbdbd]" />
            <div className="pl-[16px] mt-[4px] h-[16px] leading-[16px]">Drag fields between areas below:</div>
            <div className="ml-[15px] w-[232px] mt-[16px] grid grid-cols-[115px_1px_116px] grid-rows-[124px_1px_125px]">
              <div>
                <div className="h-[20px] flex items-center pl-[4px] gap-[9px]"><svg width="11" height="11" viewBox="0 0 11 11"><path d="M0 0h11L7 5v6L4 9V5z" fill="#8d8d8d" /></svg>Filters</div>
                <div className="w-[109px] h-[98px] bg-[#fcfffe] overflow-hidden"><AreaItem t="Type" /></div>
              </div>
              <div className="bg-[#bdbdbd]" />
              <div className="pl-[2px]">
                <div className="h-[20px] flex items-center pl-[5px] gap-[8px]"><svg width="10" height="10" viewBox="0 0 10 10"><path d="M0 0h1v10H0zM3 0h1v10H3zM5 0h1v10H5zM7 0h1v10H7zM9 0h1v10H9z" fill="#8d8d8d" /></svg>Columns</div>
                <div className="w-[114px] h-[98px] bg-[#fcfffe] overflow-hidden"><AreaItem t="Region" /></div>
              </div>
              <div className="col-span-3 bg-[#bdbdbd]" />
              <div>
                <div className="h-[26px] flex items-center pl-[5px] gap-[9px] pt-[4px]"><svg width="10" height="9" viewBox="0 0 10 9"><path d="M0 0h10v1H0zM0 2.500h10v1H0zM0 5h10v1H0zM0 7.500h10v1H0z" fill="#8d8d8d" /></svg>Rows</div>
                <div className="w-[109px] h-[99px] bg-[#fcfffe] overflow-hidden"><AreaItem t="Product" /><AreaItem t="Year Ended" /></div>
              </div>
              <div className="bg-[#bdbdbd]" />
              <div className="pl-[2px]">
                <div className="h-[26px] flex items-center pl-[5px] gap-[8px] pt-[4px]"><span className="w-[10px] text-[#8d8d8d] text-[14px] leading-none font-['Liberation_Serif',serif]">Σ</span>Values</div>
                <div className="w-[114px] h-[99px] bg-[#fcfffe] overflow-hidden"><AreaItem t="Sum of Amou..." /></div>
              </div>
            </div>
            <div className="mt-[20px] ml-[15px] mr-[14px] h-[21px] flex items-center">
              <div className="w-[14px] h-[14px] bg-white border border-[#9a9a9a]" />
              <span className="ml-[5px]">Defer Layout Update</span>
              <div className="ml-auto w-[46px] h-[21px] bg-[#fafafa] flex items-center justify-center text-[#b0b0b0]">Update</div>
            </div>
          </div>
        </div>
        {/* status bar */}
        <div className="h-[21px] shrink-0 bg-[#f1f1f1] flex items-center text-[11.2px] text-[#555]">
          <div className="pl-[7px]">Ready</div>
          <div className="ml-auto h-full flex items-center">
            <div className="w-[38px] h-full bg-[#c6c6c6] flex items-center justify-center">
              <svg width="13" height="13" viewBox="0 0 13 13"><path d="M.5.500h12v12H.5zM4.500.500v12M8.500.500v12M.5 4.500h12M.5 8.500h12" fill="none" stroke="#666" /></svg>
            </div>
            <div className="w-[38px] flex justify-center">
              <svg width="13" height="13" viewBox="0 0 13 13"><path d="M.5.500h12v12H.5z" fill="none" stroke="#666" /><path d="M3 3.500h7M3 6.500h7M3 9.500h7" stroke="#666" /></svg>
            </div>
            <div className="w-[38px] flex justify-center">
              <svg width="13" height="12" viewBox="0 0 13 12"><path d="M.5 12V.5h12V12M.5 8.500h12M6.500.500v5" fill="none" stroke="#666" /></svg>
            </div>
            <div className="ml-[6px] w-[5px] h-[2px] bg-[#666]" />
            <div className="ml-[3px] w-[100px] h-px bg-[#999] flex items-center justify-center">
              <div className="w-[4px] h-[12px] bg-[#666] shrink-0" />
            </div>
            <div className="ml-[4px]"><svg width="8" height="8" viewBox="0 0 8 8"><path d="M0 3h8v2H0zM3 0h2v8H3z" fill="#666" /></svg></div>
            <div className="ml-[18px] w-[46px] whitespace-nowrap">100%</div>
          </div>
        </div>
      </div>
      {/* mouse cursor */}
      <svg width="14" height="14" viewBox="0 0 14 14" className="absolute left-[798px] top-[524px]">
        <path d="M4.500 .5h5v4h4v5h-4v4h-5v-4h-4v-5h4z" fill="#fff" stroke="#000" />
      </svg>
    </div>
  );
}
